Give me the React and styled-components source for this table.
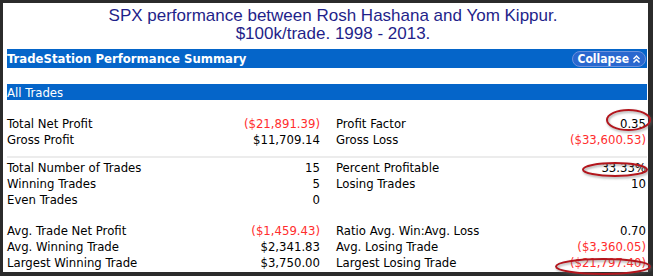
import React from "react";
import styled, { createGlobalStyle } from "styled-components";

const Global = createGlobalStyle`
  html, body { margin: 0; padding: 0; background: #2b2b2b; }
  #root { width: 653px; height: 276px; }
`;

const Frame = styled.div`
  position: relative;
  box-sizing: border-box;
  width: 653px;
  height: 276px;
  padding: 3px 5px 4px 3px;
  background: #2b2b2b;
  overflow: hidden;
`;

const Panel = styled.div`
  background: #ffffff;
  height: 100%;
  display: flex;
  flex-direction: column;
`;

const Title = styled.div`
  padding: 4px 0 0 15px;
  text-align: center;
  font-family: "Liberation Sans", Arial, sans-serif;
  font-size: 17px;
  line-height: 18px;
  color: #1f1f8a;
`;

const Summary = styled.div`
  margin: 6px 1px 0 4px;
  font-family: Tahoma, "DejaVu Sans Condensed", "DejaVu Sans", sans-serif;
  font-size: 13px;
  color: #000;
`;

const Bar = styled.div`
  display: flex;
  align-items: center;
  justify-content: space-between;
  background: #0565c9;
  color: #ffffff;
  height: ${(p) => p.$h}px;
  font-weight: ${(p) => (p.$bold ? 700 : 400)};
  font-size: 13px;
  margin-bottom: 16px;
`;

const Collapse = styled.span`
  display: inline-flex;
  align-items: center;
  gap: 3px;
  box-sizing: border-box;
  height: 16px;
  padding: 0 4px 0 5px;
  margin-right: 1px;
  border-radius: 8px;
  background: #2a68cf;
  border: 1px solid #6d92dc;
  font-size: 12px;
  font-weight: 700;
`;

const Group = styled.div`
  border-bottom: ${(p) => (p.$sep ? "2px solid #ececec" : "none")};
  padding-bottom: ${(p) => p.$pb}px;
  margin-bottom: ${(p) => p.$mb}px;
`;

const Row = styled.div`
  display: grid;
  grid-template-columns: 314px 311px;
  column-gap: 15px;
  height: 16px;
  line-height: 16px;
`;

const Cell = styled.div`
  display: flex;
  justify-content: space-between;
  padding-right: 1px;
  white-space: nowrap;
`;

const Value = styled.span`
  color: ${(p) => (p.$neg ? "#ff2d2d" : "#000")};
`;

const Mark = styled.svg`
  position: absolute;
  overflow: visible;
  pointer-events: none;
`;

function Ellipse({ x, y, w, h }) {
  return (
    <Mark
      style={{ left: x, top: y }}
      width={w}
      height={h}
      viewBox={`0 0 ${w} ${h}`}
    >
      <defs>
        <filter id={`sh${x}`} x="-20%" y="-40%" width="140%" height="180%">
          <feDropShadow dx="1" dy="1.5" stdDeviation="1.3" floodColor="#666" floodOpacity="0.6" />
        </filter>
      </defs>
      <ellipse
        cx={w / 2}
        cy={h / 2}
        rx={w / 2 - 1}
        ry={h / 2 - 1}
        fill="none"
        stroke="#b3121f"
        strokeWidth="2"
        filter={`url(#sh${x})`}
      />
    </Mark>
  );
}

const ChevronUp = () => (
  <svg width="9" height="10" viewBox="0 0 9 10">
    <path d="M1.5 5 L4.5 2 L7.5 5 M1.5 8.5 L4.5 5.5 L7.5 8.5" fill="none" stroke="#fff" strokeWidth="1.5" />
  </svg>
);

const groups = [
  {
    sep: true,
    pb: 8,
    mb: 2,
    rows: [
      [["Total Net Profit", "($21,891.39)", true], ["Profit Factor", "0.35"]],
      [["Gross Profit", "$11,709.14"], ["Gross Loss", "($33,600.53)", true]],
    ],
  },
  {
    pb: 0,
    mb: 15,
    rows: [
      [["Total Number of Trades", "15"], ["Percent Profitable", "33.33%"]],
      [["Winning Trades", "5"], ["Losing Trades", "10"]],
      [["Even Trades", "0"], null],
    ],
  },
  {
    pb: 0,
    mb: 0,
    rows: [
      [["Avg. Trade Net Profit", "($1,459.43)", true], ["Ratio Avg. Win:Avg. Loss", "0.70"]],
      [["Avg. Winning Trade", "$2,341.83"], ["Avg. Losing Trade", "($3,360.05)", true]],
      [["Largest Winning Trade", "$3,750.00"], ["Largest Losing Trade", "($21,797.40)", true]],
    ],
  },
];

const Stat = ({ item }) =>
  item ? (
    <Cell>
      <span>{item[0]}</span>
      <Value $neg={item[2]}>{item[1]}</Value>
    </Cell>
  ) : (
    <Cell />
  );

export default function App() {
  return (
    <>
      <Global />
      <Frame>
        <Panel>
          <Title>
            SPX performance between Rosh Hashana and Yom Kippur.
            <br />
            $100k/trade. 1998 - 2013.
          </Title>
          <Summary>
            <Bar $h={19} $bold>
              <span>TradeStation Performance Summary</span>
              <Collapse>
                Collapse <ChevronUp />
              </Collapse>
            </Bar>
            <Bar $h={16}>All Trades</Bar>
            {groups.map((g, gi) => (
              <Group key={gi} $sep={g.sep} $pb={g.pb} $mb={g.mb}>
                {g.rows.map((r, ri) => (
                  <Row key={ri}>
                    <Stat item={r[0]} />
                    <Stat item={r[1]} />
                  </Row>
                ))}
              </Group>
            ))}
          </Summary>
        </Panel>
        <Ellipse x={606} y={109} w={45} h={22} />
        <Ellipse x={582} y={162} w={66} h={15} />
        <Ellipse x={555} y={258} w={96} h={17} />
      </Frame>
    </>
  );
}
